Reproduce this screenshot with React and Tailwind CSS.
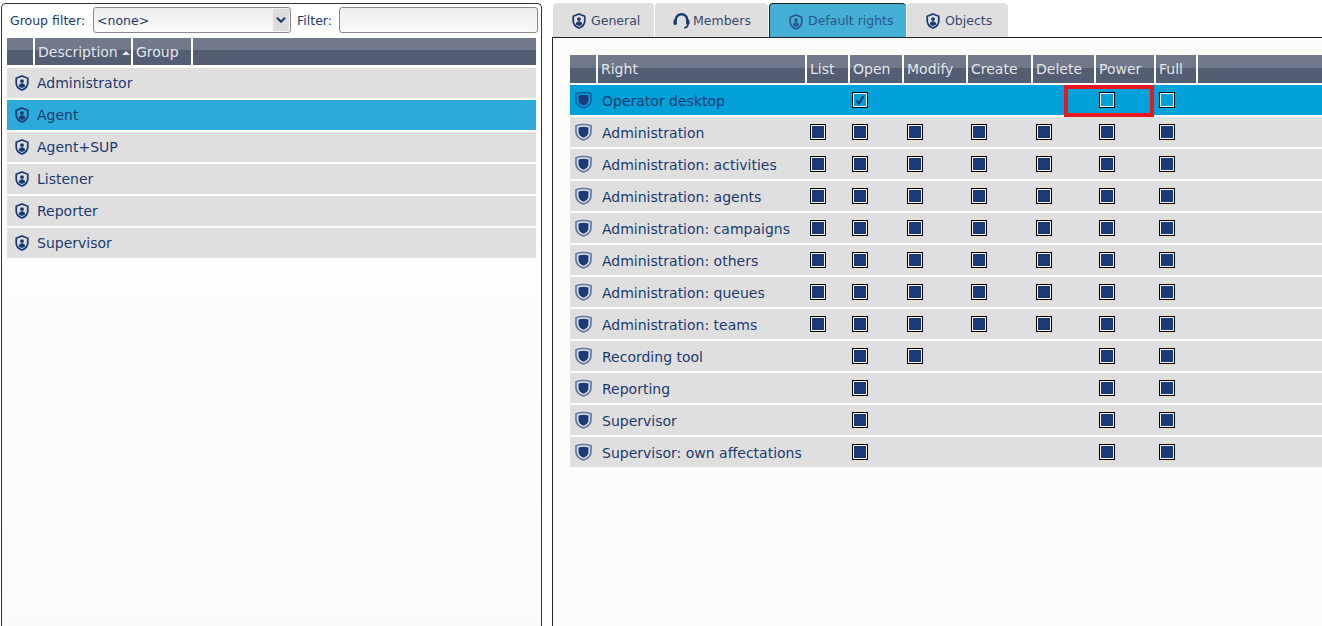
import { ChevronDown } from "lucide-react";

const groups = ["Administrator", "Agent", "Agent+SUP", "Listener", "Reporter", "Supervisor"];

// right name, then the checkboxes of the row: list, open, modify, create, delete, power, full
const rights = [
  ["Operator desktop", [0, 2, 0, 0, 0, 3, 3]],
  ["Administration", [1, 1, 1, 1, 1, 1, 1]],
  ["Administration: activities", [1, 1, 1, 1, 1, 1, 1]],
  ["Administration: agents", [1, 1, 1, 1, 1, 1, 1]],
  ["Administration: campaigns", [1, 1, 1, 1, 1, 1, 1]],
  ["Administration: others", [1, 1, 1, 1, 1, 1, 1]],
  ["Administration: queues", [1, 1, 1, 1, 1, 1, 1]],
  ["Administration: teams", [1, 1, 1, 1, 1, 1, 1]],
  ["Recording tool", [0, 1, 1, 0, 0, 1, 1]],
  ["Reporting", [0, 1, 0, 0, 0, 1, 1]],
  ["Supervisor", [0, 1, 0, 0, 0, 1, 1]],
  ["Supervisor: own affectations", [0, 1, 0, 0, 0, 1, 1]],
];

const columns = [
  ["List", "w-[41px]", "pl-[3px]"],
  ["Open", "w-[52px]", "pl-[2px]"],
  ["Modify", "w-[62px]", "pl-[3px]"],
  ["Create", "w-[63px]", "pl-[3px]"],
  ["Delete", "w-[61px]", "pl-[3px]"],
  ["Power", "w-[58px]", "pl-[3px]"],
  ["Full", "w-[40px]", "pl-[3px]"],
];

const head = "flex items-center bg-[linear-gradient(#707a8a_0,#707a8a_45%,#535e73_45%,#535e73_100%)] text-[#e4e6ea] text-[14px] pl-[3px] shrink-0";

function GroupIcon({ className = "" }) {
  return (
    <svg viewBox="0 0 16 18" className={"w-[14px] h-[16px] shrink-0 " + className}>
      <path d="M8 1 14.600 3.600V9c0 3.800-2.800 6.500-6.600 8C4.200 15.500 1.400 12.800 1.400 9V3.600Z" fill="none" stroke="#1b3a70" strokeWidth="2" />
      <circle cx="8" cy="6.800" r="2.200" fill="#1b3a70" />
      <path d="M4.200 12.600c.4-2.200 2-3.200 3.800-3.200s3.400 1 3.800 3.200c-1 .9-2.400 1.500-3.800 2-1.400-.5-2.800-1.100-3.800-2Z" fill="#1b3a70" />
    </svg>
  );
}

function RightIcon({ selected }) {
  return (
    <svg viewBox="0 0 17 18" className="w-[17px] h-[18px] shrink-0">
      <path d="M1 2.800C6 1 11 1 16 2.800V9c0 3.800-3.200 6.500-7.500 8C4.200 15.500 1 12.800 1 9Z" fill="none" stroke={selected ? "#1c5a9c" : "#5f74a3"} strokeWidth="1.600" />
      <path d="M3.500 4.500c3.300-1 6.700-1 10 0V9c0 2.700-2.200 4.600-5 5.800C5.700 13.600 3.500 11.700 3.500 9Z" fill="#1b3a78" />
    </svg>
  );
}

function HeadsetIcon() {
  return (
    <svg viewBox="0 0 17 16" className="w-[17px] h-[16px] shrink-0 -mr-[2px] -ml-px">
      <path d="M2.700 8V7a5.800 5.800 0 0 1 11.600 0v1" fill="none" stroke="#1b3a70" strokeWidth="2.400" />
      <rect x="0.500" y="6.500" width="3.400" height="5.500" rx="1.400" fill="#1b3a70" />
      <rect x="13.100" y="6.500" width="3.400" height="5.500" rx="1.400" fill="#1b3a70" />
      <path d="M14.800 11.500c0 2-1.500 3.200-3.800 3.200" fill="none" stroke="#1b3a70" strokeWidth="1.600" />
    </svg>
  );
}

function Check({ state }) {
  if (!state) return null;
  const fill = state === 1 ? "bg-[#1b3a78]" : "bg-[#00a0d8]";
  return (
    <div className="w-[16px] h-[16px] border border-black bg-[#f4f4f4] p-px">
      <div className={"w-full h-full flex items-center justify-center " + fill}>
        {state === 2 && (
          <svg viewBox="0 0 12 12" className="w-[12px] h-[12px]">
            <path d="M2.500 6.500 5 9.500 9.500 2" fill="none" stroke="#1b3a78" strokeWidth="2" />
          </svg>
        )}
      </div>
    </div>
  );
}

function Tab({ icon, label, active, width }) {
  return (
    <div className={"h-[34px] flex items-center pl-[19px] pt-[2px] gap-[5px] rounded-t-[4px] text-[12.5px] " + width + " " + (active ? "bg-[#45afd5] text-[#2b5686] border-l border-t border-[#222]" : "bg-[#dfdfdf] text-[#34496f]")}>
      {icon}
      {label}
    </div>
  );
}

export default function App() {
  return (
    <div className="w-[1322px] h-[626px] overflow-hidden flex pt-[3px] pl-px bg-white text-[#1b3a70] font-['DejaVu_Sans',sans-serif]">
      <div className="w-[541px] h-[640px] shrink-0 border-l border-t border-r border-[#333] rounded-t-[5px] p-[3px] pl-[5px] bg-[linear-gradient(#ffffff,#fafafa)]">
        <div className="h-[26px] flex items-center text-[12.5px]">
          <span className="w-[86px] pl-[3px] pt-[2px] shrink-0">Group filter:</span>
          <div className="w-[198px] h-[26px] shrink-0 border border-[#8a8a8a] rounded-[3px] bg-[linear-gradient(#ededed,#fafafa)] flex items-center justify-between pl-[3px] pr-px">
            <span className="pt-[2px]">&lt;none&gt;</span>
            <div className="w-[16px] h-[22px] bg-[#dcdcdc] rounded-[2px] flex items-center justify-center">
              <ChevronDown size={14} strokeWidth={3.500} color="#1b3a70" />
            </div>
          </div>
          <span className="w-[48px] pl-[6px] pt-[2px] shrink-0">Filter:</span>
          <div className="w-[199px] h-[26px] shrink-0 border border-[#8a8a8a] rounded-[3px] bg-[linear-gradient(#ededed,#fafafa)]"></div>
        </div>

        <div className="w-[529px] mt-[5px] flex gap-[2px] mb-[3px]">
          <div className={head + " h-[27px] w-[26px]"}></div>
          <div className={head + " h-[27px] pt-[2px] w-[96px]"}>
            Description
            <span className="ml-[4px] border-x-[4px] border-x-transparent border-b-[4px] border-b-[#e4e6ea]"></span>
          </div>
          <div className={head + " h-[27px] pt-[2px] w-[58px]"}>Group</div>
          <div className={head + " h-[27px] flex-1"}></div>
        </div>

        <div className="w-[529px] flex flex-col gap-[2px]">
          {groups.map((name) => (
            <div key={name} className={"h-[30px] flex items-center pl-[8px] gap-[8px] text-[14px] " + (name === "Agent" ? "bg-[#2aabdb]" : "bg-[#dfdfdf]")}>
              <GroupIcon />
              {name}
            </div>
          ))}
        </div>
      </div>

      <div className="ml-[10px] flex-1 min-w-0">
        <div className="flex pl-px gap-px">
          <Tab icon={<GroupIcon />} label="General" width="w-[101px]" />
          <Tab icon={<HeadsetIcon />} label="Members" width="w-[113px]" />
          <Tab icon={<GroupIcon className="opacity-70" />} label="Default rights" active width="w-[137px]" />
          <Tab icon={<GroupIcon />} label="Objects" width="w-[101px]" />
        </div>

        <div className="h-[600px] border-l border-t border-[#222] pl-[17px] pt-[17px] bg-[#fcfcfb]">
          <div className="flex gap-[2px] mb-[2px]">
            <div className={head + " h-[28px] w-[26px]"}></div>
            <div className={head + " h-[28px] w-[207px]"}>Right</div>
            {columns.map(([label, width]) => (
              <div key={label} className={head + " h-[28px] " + width}>{label}</div>
            ))}
            <div className={head + " h-[28px] flex-1"}></div>
          </div>

          <div className="relative flex flex-col gap-[2px]">
            {rights.map(([name, boxes], i) => (
              <div key={name} className={"h-[30px] flex gap-[2px] text-[14px] " + (i === 0 ? "bg-[#00a0d8]" : "bg-[#dfdfdf]")}>
                <div className="w-[26px] flex items-center justify-center pb-[1px]"><RightIcon selected={i === 0} /></div>
                <div className="w-[207px] flex items-center pl-[4px] pt-[2px] whitespace-nowrap">{name}</div>
                {columns.map(([label, width, pad], c) => (
                  <div key={label} className={"flex items-center shrink-0 " + pad + " " + width}>
                    <Check state={boxes[c]} />
                  </div>
                ))}
              </div>
            ))}
            <div className="absolute left-[494px] top-0 w-[90px] h-[32px] border-[4px] border-[#e8161f]"></div>
          </div>
        </div>
      </div>
    </div>
  );
}
